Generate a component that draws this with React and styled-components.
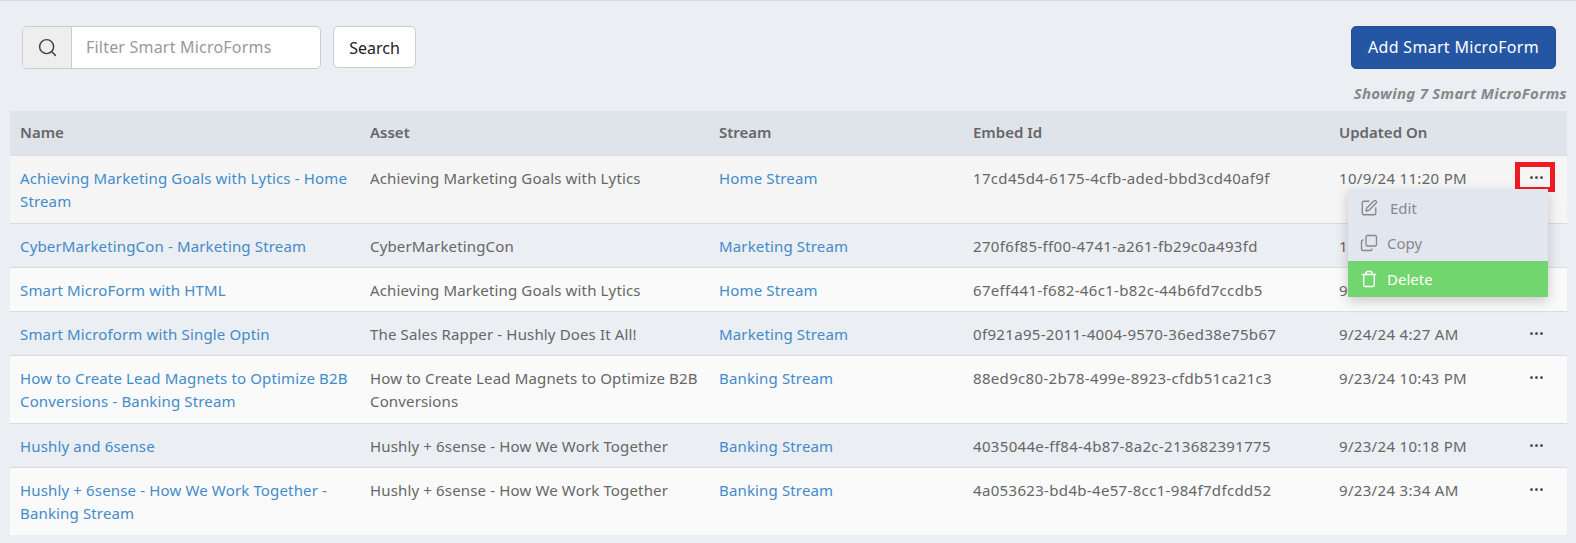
import React from "react";
import styled, { createGlobalStyle } from "styled-components";
import { Search as SearchIcon, SquarePen, Copy, Trash } from "lucide-react";

const Global = createGlobalStyle`
  html, body { margin: 0; padding: 0; background: #ebeef3; }
  body { font-family: "Noto Sans", "Open Sans", sans-serif; font-size: 15px; color: #666; }
`;
const Page = styled.div`
  height: 543px; box-sizing: border-box; border-top: 1px solid #dcdcdc; padding: 25px 9px 0 10px; overflow: hidden;
`;
const Toolbar = styled.div`
  display: flex; justify-content: space-between; align-items: flex-start; padding: 0 11px 0 12px;
`;
const SearchGroup = styled.div`display: flex; gap: 12px; align-items: flex-start;`;
const InputGroup = styled.div`
  display: flex; width: 299px; height: 43px; box-sizing: border-box; border: 1px solid #ccc; border-radius: 5px; overflow: hidden; background: #fff;
`;
const Addon = styled.div`
  width: 48px; flex: none; display: flex; align-items: center; justify-content: center; background: #eee; border-right: 1px solid #ccc; color: #444;
`;
const Placeholder = styled.div`
  padding-left: 14px; line-height: 41px; font-size: 16px; letter-spacing: .2px; color: #999; white-space: nowrap;
`;
const SearchButton = styled.div`
  width: 83px; height: 42px; box-sizing: border-box; border: 1px solid #ccc; border-radius: 5px; background: #fff; color: #222; font-size: 16px; line-height: 42px; text-align: center;
`;
const AddButton = styled.div`
  width: 205px; height: 43px; box-sizing: border-box; border: 1px solid #1f5096; border-radius: 5px; background: #2556a3; color: #fff; font-size: 16px; letter-spacing: .3px; line-height: 41px; text-align: center;
`;
const Count = styled.div`
  text-align: right; font-size: 15px; letter-spacing: .27px; font-weight: 700; font-style: italic; color: #888; line-height: 20px; margin-top: 14px; margin-bottom: 8px;
`;
const TableWrap = styled.div`position: relative;`;
const Table = styled.table`
  width: 100%; table-layout: fixed; border-collapse: collapse; line-height: 23.4px;
`;
const Th = styled.th`
  height: 44px; padding: 0 10px; box-sizing: border-box; background: #dfe3ea; border-bottom: 1px solid #dcdcdc; text-align: left; font-weight: 600; color: #666; font-size: 15px;
`;
const Row = styled.tr`
  height: ${p => (p.$tall ? "68px" : "44px")};
  background: ${p => (p.$shade === "a" ? "#f5f5f5" : p.$shade === "b" ? "#ebeef3" : "#fafafa")};
  border-bottom: ${p => (p.$last ? "none" : "1px solid #dcdcdc")};
`;
const Td = styled.td`
  padding: 11px 10px 8.6px; vertical-align: top; color: #666; font-size: 15px; letter-spacing: ${p => p.$spacing || ".15px"}; white-space: normal;
`;
const NameCell = styled(Td)`padding-right: 4px;`;
const Link = styled.span`color: #428bca;`;
const Dots = styled.div`
  width: 54px; display: flex; justify-content: center; gap: 2px; padding-top: 9px;
`;
const Dot = styled.i`display: block; width: 3px; height: 3px; border-radius: 50%; background: #555;`;
const Highlight = styled.div`
  position: absolute; left: 1505px; top: 51px; width: 40px; height: 30px; box-sizing: border-box; border: 5px solid #ed1c24;
`;
const Menu = styled.div`
  position: absolute; left: 1338px; top: 78px; width: 200px; background: #e2e7ef; box-shadow: 0 4px 12px rgba(0,0,0,.2); color: #888; font-size: 15px;
`;
const MenuItem = styled.div`
  height: 36px; box-sizing: border-box; display: flex; align-items: center; gap: 9px; padding-left: 12px; line-height: 36px;
  padding-top: ${p => (p.$first ? "2px" : "0")};
  background: ${p => (p.$active ? "#72d66e" : "transparent")};
  color: ${p => (p.$active ? "#fff" : "#888")};
`;
const EditLabel = styled.span`margin-left: 3px;`;
const CopyIcon = styled(Copy)`transform: scaleY(-1);`;

const rows = [
  ["Achieving Marketing Goals with Lytics - Home Stream", "Achieving Marketing Goals with Lytics", "Home Stream", "17cd45d4-6175-4cfb-aded-bbd3cd40af9f", "10/9/24 11:20 PM", true],
  ["CyberMarketingCon - Marketing Stream", "CyberMarketingCon", "Marketing Stream", "270f6f85-ff00-4741-a261-fb29c0a493fd", "10/1/24 2:10 PM", false],
  ["Smart MicroForm with HTML", "Achieving Marketing Goals with Lytics", "Home Stream", "67eff441-f682-46c1-b82c-44b6fd7ccdb5", "9/27/24 5:12 PM", false],
  ["Smart Microform with Single Optin", "The Sales Rapper - Hushly Does It All!", "Marketing Stream", "0f921a95-2011-4004-9570-36ed38e75b67", "9/24/24 4:27 AM", false],
  ["How to Create Lead Magnets to Optimize B2B Conversions - Banking Stream", "How to Create Lead Magnets to Optimize B2B Conversions", "Banking Stream", "88ed9c80-2b78-499e-8923-cfdb51ca21c3", "9/23/24 10:43 PM", true],
  ["Hushly and 6sense", "Hushly + 6sense - How We Work Together", "Banking Stream", "4035044e-ff84-4b87-8a2c-213682391775", "9/23/24 10:18 PM", false],
  ["Hushly + 6sense - How We Work Together - Banking Stream", "Hushly + 6sense - How We Work Together", "Banking Stream", "4a053623-bd4b-4e57-8cc1-984f7dfcdd52", "9/23/24 3:34 AM", true],
];
const shades = ["a", "b", "c", "b", "c", "b", "c"];

export default function App() {
  return (
    <Page>
      <Global />
      <Toolbar>
        <SearchGroup>
          <InputGroup>
            <Addon><SearchIcon size={21} strokeWidth={1.7} /></Addon>
            <Placeholder>Filter Smart MicroForms</Placeholder>
          </InputGroup>
          <SearchButton>Search</SearchButton>
        </SearchGroup>
        <AddButton>Add Smart MicroForm</AddButton>
      </Toolbar>
      <Count>Showing 7 Smart MicroForms</Count>
      <TableWrap>
        <Table>
          <colgroup>
            <col style={{ width: 350 }} /><col style={{ width: 349 }} /><col style={{ width: 254 }} /><col style={{ width: 366 }} /><col style={{ width: 170 }} /><col />
          </colgroup>
          <thead>
            <tr><Th>Name</Th><Th>Asset</Th><Th>Stream</Th><Th>Embed Id</Th><Th>Updated On</Th><Th /></tr>
          </thead>
          <tbody>
            {rows.map((r, i) => (
              <Row key={r[3]} $shade={shades[i]} $tall={r[5]} $last={i === rows.length - 1}>
                <NameCell><Link>{r[0]}</Link></NameCell>
                <Td>{r[1]}</Td>
                <Td><Link>{r[2]}</Link></Td>
                <Td $spacing=".33px">{r[3]}</Td>
                <Td $spacing=".32px">{r[4]}</Td>
                <Td><Dots><Dot /><Dot /><Dot /></Dots></Td>
              </Row>
            ))}
          </tbody>
        </Table>
        <Highlight />
        <Menu>
          <MenuItem $first><SquarePen size={18} strokeWidth={1.8} /><EditLabel>Edit</EditLabel></MenuItem>
          <MenuItem><CopyIcon size={18} strokeWidth={1.8} /><span>Copy</span></MenuItem>
          <MenuItem $active><Trash size={18} strokeWidth={1.8} /><span>Delete</span></MenuItem>
        </Menu>
      </TableWrap>
    </Page>
  );
}
